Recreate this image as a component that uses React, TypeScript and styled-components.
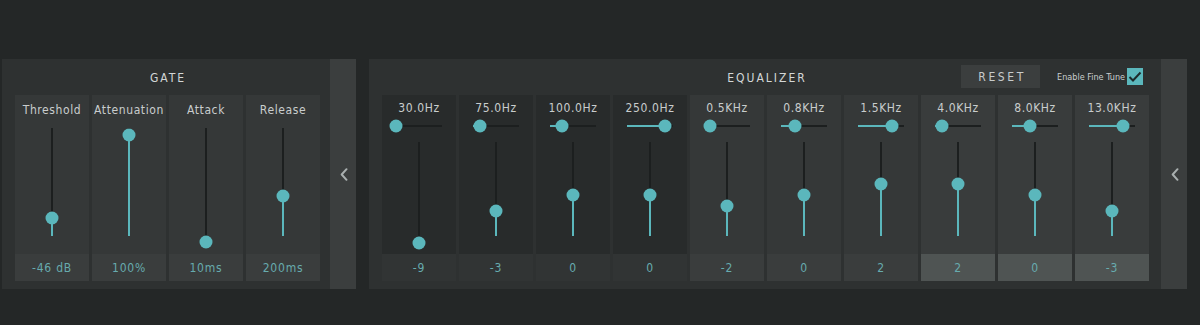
import React from "react";
import styled, { createGlobalStyle } from "styled-components";

const GlobalStyle = createGlobalStyle`
    body {
        margin: 0;
        background-color: #242727;
        font-family: "DejaVu Sans Condensed", "DejaVu Sans", sans-serif;
    }
`;

const TEAL = "#5bb7bc";

type Tone = "dark" | "mid" | "light";

const columnBg: Record<Tone, string> = { dark: "#282b2b", mid: "#353838", light: "#393c3c" };
const valueBg: Record<Tone, string> = { dark: "#313434", mid: "#3a3d3d", light: "#4f5453" };

const Page = styled.div`
    display: flex;
    flex-direction: row;
    gap: 13px;
    padding: 59px 0 0 2px;
`;

const Group = styled.div`
    display: flex;
    flex-direction: row;
    height: 230px;
`;

const Panel = styled.section<{ $width: number }>`
    display: flex;
    flex-direction: column;
    width: ${(p) => p.$width}px;
    background-color: #2e3131;
    padding: 0 0 8px 13px;
    box-sizing: border-box;
`;

const Header = styled.div`
    position: relative;
    height: 36px;
    display: flex;
    align-items: center;
    justify-content: center;
    padding-right: 13px;
`;

const Title = styled.h2<{ $shift?: number }>`
    margin: 1px 0 0 ${(p) => p.$shift || 0}px;
    font-size: 12px;
    font-weight: normal;
    letter-spacing: 2px;
    color: #d3d7d7;
`;

const HeaderTools = styled.div`
    position: absolute;
    right: 18px;
    top: 6px;
    display: flex;
    align-items: center;
    gap: 17px;
`;

const ResetButton = styled.button`
    width: 79px;
    height: 23px;
    border: none;
    background-color: #3b3e3e;
    color: #c7cbcb;
    font-family: "DejaVu Sans Condensed", "DejaVu Sans", sans-serif;
    font-size: 12px;
    letter-spacing: 2.6px;
    padding: 0 0 0 3px;
`;

const FineTune = styled.label`
    display: flex;
    align-items: center;
    gap: 2px;
    font-size: 9px;
    color: #c9cdcd;
`;

const CheckBox = styled.span`
    width: 16px;
    height: 17px;
    background-color: ${TEAL};
    display: flex;
    align-items: center;
    justify-content: center;
`;

const Columns = styled.div`
    display: flex;
    flex-direction: row;
    gap: 3px;
`;

const Column = styled.div<{ $tone: Tone }>`
    width: 74px;
    height: 186px;
    display: flex;
    flex-direction: column;
    align-items: center;
    background-color: ${(p) => columnBg[p.$tone]};
`;

const Label = styled.div<{ $height: number }>`
    height: ${(p) => p.$height}px;
    line-height: ${(p) => p.$height + 2}px;
    font-size: 12px;
    letter-spacing: 0.6px;
    color: #c9cdcd;
    white-space: nowrap;
`;

const SliderArea = styled.div`
    flex: 1;
    display: flex;
    flex-direction: column;
    align-items: center;
`;

const VTrack = styled.div<{ $height: number; $top: number }>`
    position: relative;
    width: 2px;
    height: ${(p) => p.$height}px;
    margin-top: ${(p) => p.$top}px;
    background-color: #1c1f1f;
`;

const VFill = styled.div`
    position: absolute;
    left: 0;
    bottom: 0;
    width: 2px;
    background-color: ${TEAL};
`;

const Thumb = styled.div`
    position: absolute;
    width: 13px;
    height: 13px;
    border-radius: 50%;
    background-color: ${TEAL};
    transform: translate(-50%, -50%);
`;

const VThumb = styled(Thumb)`
    left: 1px;
`;

const HTrackRow = styled.div`
    height: 14px;
    display: flex;
    align-items: center;
`;

const HTrack = styled.div`
    position: relative;
    width: 46px;
    height: 2px;
    background-color: #1c1f1f;
`;

const HFill = styled.div`
    position: absolute;
    left: 0;
    top: 0;
    height: 2px;
    background-color: ${TEAL};
`;

const HThumb = styled(Thumb)`
    top: 1px;
`;

const Value = styled.div<{ $tone: Tone }>`
    width: 100%;
    height: 27px;
    line-height: 28px;
    text-align: center;
    font-size: 12px;
    letter-spacing: 0.8px;
    color: #67abae;
    background-color: ${(p) => valueBg[p.$tone]};
`;

const Strip = styled.button`
    width: 26px;
    height: 230px;
    border: none;
    padding: 0 0 0 1px;
    background-color: #3b3e3e;
    display: flex;
    align-items: center;
    justify-content: center;
`;

function Chevron() {
    return (
        <svg width="8" height="13" viewBox="0 0 8 13">
            <polyline points="6.5,1.2 1.7,6.5 6.5,11.8" fill="none" stroke="#a9afaf" strokeWidth="2" strokeLinecap="round" strokeLinejoin="round" />
        </svg>
    );
}

// centre of the thumb, measured from the top of the track
function VSlider({ height, top, center }: { height: number; top: number; center: number }) {
    const fill = Math.max(0, height - center);
    return (
        <VTrack $height={height} $top={top}>
            <VFill style={{ height: fill }} />
            <VThumb style={{ top: center }} />
        </VTrack>
    );
}

const gate = [
    { name: "Threshold", value: "-46 dB", level: 0.224 },
    { name: "Attenuation", value: "100%", level: 1 },
    { name: "Attack", value: "10ms", level: 0 },
    { name: "Release", value: "200ms", level: 0.43 },
];

const bands: { freq: string; q: number; gain: number; tone: Tone }[] = [
    { freq: "30.0Hz", q: 0, gain: -9, tone: "dark" },
    { freq: "75.0Hz", q: 0.15, gain: -3, tone: "dark" },
    { freq: "100.0Hz", q: 0.27, gain: 0, tone: "dark" },
    { freq: "250.0Hz", q: 0.83, gain: 0, tone: "dark" },
    { freq: "0.5KHz", q: 0.13, gain: -2, tone: "mid" },
    { freq: "0.8KHz", q: 0.3, gain: 0, tone: "mid" },
    { freq: "1.5KHz", q: 0.74, gain: 2, tone: "mid" },
    { freq: "4.0KHz", q: 0.15, gain: 2, tone: "light" },
    { freq: "8.0KHz", q: 0.39, gain: 0, tone: "light" },
    { freq: "13.0KHz", q: 0.74, gain: -3, tone: "light" },
];

export default function App() {
    return (
        <>
            <GlobalStyle />
            <Page>
                <Group>
                    <Panel $width={328}>
                        <Header>
                            <Title $shift={4}>GATE</Title>
                        </Header>
                        <Columns>
                            {gate.map((g) => (
                                <Column key={g.name} $tone="mid">
                                    <Label $height={28}>{g.name}</Label>
                                    <SliderArea>
                                        <VSlider height={108} top={5} center={7 + (1 - g.level) * 107} />
                                    </SliderArea>
                                    <Value $tone="mid">{g.value}</Value>
                                </Column>
                            ))}
                        </Columns>
                    </Panel>
                    <Strip><Chevron /></Strip>
                </Group>
                <Group>
                    <Panel $width={792}>
                        <Header>
                            <Title $shift={4}>EQUALIZER</Title>
                            <HeaderTools>
                                <ResetButton>RESET</ResetButton>
                                <FineTune>
                                    Enable Fine Tune
                                    <CheckBox>
                                        <svg width="14" height="12" viewBox="0 0 14 12">
                                            <polyline points="1.5,6 5,9.5 12.5,1.5" fill="none" stroke="#1d2a2b" strokeWidth="2" />
                                        </svg>
                                    </CheckBox>
                                </FineTune>
                            </HeaderTools>
                        </Header>
                        <Columns>
                            {bands.map((b) => (
                                <Column key={b.freq} $tone={b.tone}>
                                    <Label $height={24}>{b.freq}</Label>
                                    <HTrackRow>
                                        <HTrack>
                                            <HFill style={{ width: b.q * 46 }} />
                                            <HThumb style={{ left: b.q * 46 }} />
                                        </HTrack>
                                    </HTrackRow>
                                    <SliderArea>
                                        <VSlider height={94} top={9} center={53 - b.gain * 5.3} />
                                    </SliderArea>
                                    <Value $tone={b.tone}>{b.gain}</Value>
                                </Column>
                            ))}
                        </Columns>
                    </Panel>
                    <Strip><Chevron /></Strip>
                </Group>
            </Page>
        </>
    );
}
